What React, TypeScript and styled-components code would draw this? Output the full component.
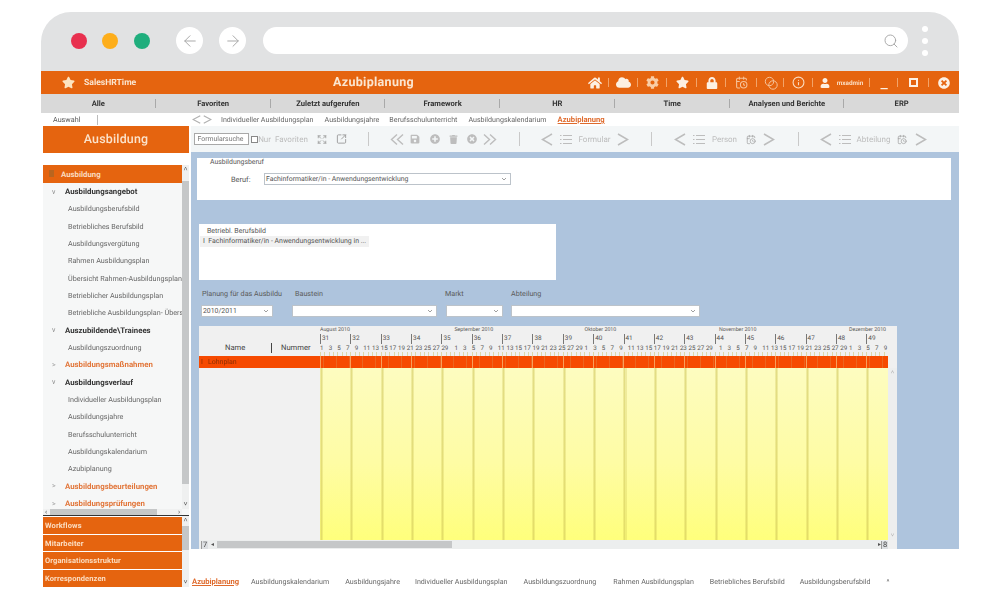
import React from "react";
import styled, { createGlobalStyle } from "styled-components";
import { FaCloud, FaCog, FaHome, FaLock, FaPlusCircle, FaSave, FaStar, FaTimesCircle, FaTrash, FaUser } from "react-icons/fa";
import { CalendarClock, Expand, Info, Search, SquareArrowOutUpRight, ArrowLeft, ArrowRight } from "lucide-react";

const Global = createGlobalStyle`
  html, body { margin: 0; padding: 0; background: #fff; width: 1000px; height: 600px; overflow: hidden; }
  * { box-sizing: border-box; }
  body { font-family: Roboto, "Liberation Sans", sans-serif; color: #555; text-rendering: geometricPrecision; }
`;

const ORANGE = "#e5640f";

const Frame = styled.div`
  width: 918px;
  height: 575px;
  margin: 12px 0 0 41px;
  display: flex;
  flex-direction: column;
  filter: blur(0.3px);
`;
const Chrome = styled.div`
  height: 59px;
  background: #e1e2e3;
  border-radius: 30px 30px 0 0;
  display: flex;
  align-items: center;
  padding: 0 0 2px 30px;
`;
const Light = styled.span<{ $c: string; $ml: number }>`
  width: 16px; height: 16px; border-radius: 50%;
  background: ${p => p.$c};
  margin-left: ${p => p.$ml}px;
`;
const NavBtn = styled.span<{ $ml: number }>`
  width: 27px; height: 27px; border-radius: 50%; background: #fff;
  margin-left: ${p => p.$ml}px;
  display: flex; align-items: center; justify-content: center; color: #a8a8a8;
`;
const Address = styled.div`
  width: 645px; height: 27px; border-radius: 14px; background: #fff;
  margin-left: 17px;
  display: flex; align-items: center; justify-content: flex-end; padding-right: 9px; color: #a5a5a5;
`;
const Dots = styled.div`
  margin-left: 14px;
  display: flex; flex-direction: column; gap: 6px;
  span { width: 6px; height: 6px; border-radius: 50%; background: #fff; display: block; }
`;
const TitleBar = styled.div`
  height: 23px; background: ${ORANGE}; color: #fbe6d0;
  display: flex; align-items: center;
`;
const Brand = styled.div`
  width: 292px; padding-left: 21px; display: flex; align-items: center; gap: 9px;
  font-size: 8.6px; font-weight: 700;
`;
const Title = styled.div`
  width: 76px; font-size: 12.5px; font-weight: 700; letter-spacing: .3px; white-space: nowrap; text-align: center;
`;
const Actions = styled.div`
  margin-left: auto; display: flex; height: 100%; align-items: center;
`;
const Action = styled.div<{ $w: number; $sep?: boolean }>`
  width: ${p => p.$w}px; height: 100%;
  display: flex; align-items: center; justify-content: center; gap: 7px; position: relative;
  color: #fdf0e2;
  &::after {
    content: ""; display: ${p => (p.$sep ? "block" : "none")};
    position: absolute; right: 0; top: 7px; height: 9px; width: 1px; background: #f2a469;
  }
`;
const UserName = styled.span`
  font-size: 6.4px; font-weight: 700; color: #fbdcc0;
`;
const MenuBar = styled.div`
  height: 19px; background: #d9d9d9; display: grid; grid-template-columns: repeat(8, 1fr);
`;
const MenuItem = styled.div`
  font-size: 7.6px; font-weight: 700; color: #333;
  display: flex; align-items: center; justify-content: center; position: relative;
  &:not(:last-child)::after {
    content: ""; position: absolute; right: 0; top: 5px; height: 9px; width: 1px; background: #a9a9a9;
  }
`;
const Main = styled.div`
  flex: 1; display: grid; grid-template-columns: 150px 1fr; min-height: 0;
`;
const LeftCol = styled.div`
  display: flex; flex-direction: column; padding-left: 2px; width: 148px; min-height: 0;
`;
const AuswahlTab = styled.div`
  height: 13px; display: flex; align-items: center; font-size: 7.2px; color: #555; padding-left: 10px;
  position: relative;
  &::after { content: ""; position: absolute; left: 54px; top: 2px; height: 10px; width: 1px; background: #bbb; }
`;
const PanelHead = styled.div`
  height: 27px; background: ${ORANGE}; color: #fbe3cc; font-size: 12.4px; font-weight: 500; letter-spacing: .2px;
  display: flex; align-items: center; justify-content: center;
`;
const TreeWrap = styled.div`
  margin-top: 12px; height: 350px; display: grid;
  grid-template-columns: 139px 7px; grid-template-rows: 344px 6px; background: #f6f7f7;
`;
const Tree = styled.div`
  overflow: hidden; min-width: 0;
`;
const TreeHead = styled.div`
  height: 18px; background: ${ORANGE}; color: #fbdcc0; font-size: 7.8px; font-weight: 700;
  display: flex; align-items: center; padding-left: 18px; position: relative;
  &::before { content: ""; position: absolute; left: 6px; top: 5px; width: 5px; height: 7px; background: #b9651f; }
`;
const Row = styled.div<{ $kind: "group" | "link" | "item" }>`
  height: 17.33px; display: flex; align-items: center; white-space: nowrap;
  font-size: ${p => (p.$kind === "item" ? 7.2 : 7.8)}px;
  padding-left: ${p => (p.$kind === "item" ? 25 : 9)}px;
  font-weight: ${p => (p.$kind === "item" ? 400 : 700)};
  color: ${p => (p.$kind === "item" ? "#666" : p.$kind === "link" ? "#e2763a" : "#333")};
`;
const Caret = styled.span`
  width: 13px; font-size: 7px; font-weight: 400; color: #888;
`;
const VScroll = styled.div<{ $thumbTop: number; $thumbH: number }>`
  background: #eff0f0; position: relative; color: #555; font-size: 7px;
  display: flex; flex-direction: column; justify-content: space-between; align-items: center;
  &::before {
    content: ""; position: absolute; left: 0; right: 0; top: ${p => p.$thumbTop}px; height: ${p => p.$thumbH}px; background: #c5c7c8;
  }
`;
const ArrowGlyph = styled.span`
  position: relative; line-height: 9px; height: 9px; font-size: 7px; color: #555;
`;
const HScroll = styled.div`
  background: #f0f1f1; display: flex; align-items: center; font-size: 7px; color: #555; padding: 0 2px;
  i { display: block; width: 107px; height: 6px; background: #c5c7c8; margin: 0 auto 0 3px; font-style: normal; }
`;
const ScrollEnd = styled.div`
  background: #f6f7f7;
`;
const Accordion = styled.div`
  border-top: 1.5px solid #333; height: 72px; display: grid; grid-template-columns: 139px 7px;
`;
const AccList = styled.div`
  display: flex; flex-direction: column; gap: 1px; padding-top: 1px;
`;
const AccItem = styled.div`
  height: 16.7px; background: ${ORANGE}; color: #fbdcc0; font-size: 7.5px; font-weight: 700; letter-spacing: .1px;
  display: flex; align-items: center; padding-left: 2px;
`;
const RightCol = styled.div`
  display: flex; flex-direction: column; min-width: 0;
`;
const SubTabs = styled.div`
  height: 13px; display: flex; align-items: center; padding-left: 1px; color: #b0b0b0;
`;
const TabText = styled.span<{ $ml: number; $active?: boolean }>`
  margin-left: ${p => p.$ml}px; white-space: nowrap;
  font-size: ${p => (p.$active ? 7.6 : 7.12)}px;
  color: ${p => (p.$active ? "#df6a2c" : "#666")};
  font-weight: ${p => (p.$active ? 700 : 400)};
  text-decoration: ${p => (p.$active ? "underline" : "none")};
`;
const Toolbar = styled.div`
  height: 26px; background: #f3f6f7; display: flex; align-items: center; padding-left: 3px; color: #bcbcbc;
`;
const SearchBox = styled.div`
  width: 55px; height: 12px; border: 1px solid #a8a8a8; background: #fff; font-size: 6.9px; color: #777;
  display: flex; align-items: center; padding-left: 2.5px; white-space: nowrap; overflow: hidden;
`;
const Check = styled.span`
  width: 7px; height: 7px; border: 1px solid #888; background: #fff; margin-left: 2px;
`;
const Tool = styled.span<{ $ml: number; $w: number; $dark?: boolean }>`
  margin-left: ${p => p.$ml}px; width: ${p => p.$w}px; display: flex; align-items: center; justify-content: center;
  font-size: 8px; color: ${p => (p.$dark ? "#9a9a9a" : "#bdbdbd")}; white-space: nowrap; flex: none;
`;
const ToolSep = styled.span<{ $ml: number }>`
  margin-left: ${p => p.$ml}px; width: 1px; height: 14px; background: #c9c9c9; flex: none;
`;
const Blue = styled.div`
  height: 397px; background: #aec4dd; padding: 6px 8px 0 6px; display: flex; flex-direction: column;
`;
const FieldPanel = styled.div`
  height: 42px; background: #fff; padding: 0 0 0 13px; display: flex; flex-direction: column;
  color: #555;
`;
const Legend = styled.div`
  height: 7px; line-height: 7px; font-size: 6.9px; transform: translateY(0.5px);
`;
const FieldRow = styled.div`
  display: flex; align-items: center; margin-top: 8px; padding-left: 21px;
`;
const FieldLabel = styled.span`
  width: 33px; font-size: 7.4px;
`;
const Select = styled.div<{ $w: number; $ml?: number }>`
  width: ${p => p.$w}px; height: 12px; margin-left: ${p => p.$ml ?? 0}px; background: #fff; border: 1px solid #bcc3ca;
  display: flex; align-items: center; justify-content: space-between; padding: 0 3px 0 1px;
  font-size: 6.9px; color: #555; white-space: nowrap; flex: none;
`;
const ListPanel = styled.div`
  width: 357px; height: 57px; margin: 24px 0 0 2px; background: #fff; padding-top: 3px; font-size: 7px; color: #555;
`;
const ListTitle = styled.div`
  height: 8px; line-height: 8px; padding-left: 8px;
`;
const ListRow = styled.div`
  width: 169px; height: 11px; margin-left: 1px; margin-top: 1px; background: #f1f1f1; padding-left: 3px;
  display: flex; align-items: center; white-space: nowrap; font-size: 6.95px;
`;
const FilterLabels = styled.div`
  margin: 10px 0 0 5px; height: 8px; display: flex; font-size: 7.2px; color: #5a5a5a; line-height: 8px;
`;
const FilterLabel = styled.span<{ $w: number }>`
  width: ${p => p.$w}px; white-space: nowrap; flex: none;
`;
const FilterRow = styled.div`
  margin: 7px 0 0 4px; display: flex;
`;
const Gantt = styled.div`
  margin: 9px 0 0 2px; width: 698px; height: 223px; background: #f0f0f0;
  display: grid; grid-template-columns: 121px 568px 9px; grid-template-rows: 30px 12px 172px 9px;
`;
const NameHead = styled.div`
  display: flex; align-items: flex-end; padding-bottom: 3px; font-size: 7.6px; color: #444;
  span:first-child { margin-left: 26px; width: 47px; border-right: 1px solid #444; line-height: 10px; }
  span:last-child { margin-left: 9px; line-height: 10px; }
`;
const TimeHead = styled.div`
  display: flex; flex-direction: column; overflow: hidden;
`;
const DayGrid = styled.div<{ $h: number; $fs: number }>`
  height: ${p => p.$h}px; display: grid; grid-template-columns: repeat(131, 1fr); font-size: ${p => p.$fs}px; color: #555;
`;
const Span = styled.div<{ $n: number; $line?: boolean }>`
  grid-column: span ${p => p.$n}; white-space: nowrap; overflow: visible; line-height: 8px;
  border-left: ${p => (p.$line ? "1px solid #777" : "none")};
  padding-left: ${p => (p.$line ? 1 : 0)}px;
`;
const Ticks = styled.div`
  height: 4px;
  background: repeating-linear-gradient(90deg, #ddd6a8 0 1px, transparent 1px 4.336px);
`;
const EmptyCell = styled.div`
  background: #f0f0f0;
`;
const RowName = styled.div`
  background: #f64a00; color: #8c2f00; font-size: 7px; display: flex; align-items: center; padding-left: 2px; gap: 5px;
`;
const RowBars = styled.div`
  background:
    repeating-linear-gradient(90deg, #f7a05c 0 1px, transparent 1px 30.35px),
    repeating-linear-gradient(90deg, transparent 0 3px, rgba(232,110,40,.75) 3px 4px, transparent 4px 13px),
    #f64a00;
`;
const RowEnd = styled.div`
  background: #f0f0f0;
`;
const NamesBody = styled.div`
  background: #f1f1f1;
`;
const Grid = styled.div`
  background:
    repeating-linear-gradient(90deg, rgba(205,195,85,.3) 0 1px, rgba(205,195,85,.55) 1px 2px, rgba(205,195,85,.3) 2px 3px, transparent 3px 30.35px),
    linear-gradient(180deg, #fdfcc0 0%, #fefca4 55%, #ffff7c 100%);
`;
const GanttVBar = styled.div`
  background: #edeeee; display: flex; flex-direction: column; justify-content: space-between; align-items: center; font-size: 6px; color: #aaa; padding: 1px 0;
`;
const GanttFoot = styled.div`
  grid-column: 1 / 3; background: #eceeee; display: flex; align-items: center; font-size: 7.5px; color: #444; padding-left: 2px;
`;
const PageBox = styled.span`
  width: 7px; height: 8px; background: #dcdfe2; display: flex; align-items: center; justify-content: center; border-left: 1px solid #999;
`;
const FootThumb = styled.i`
  display: block; width: 235px; height: 7px; background: #c5c7c8; margin: 0 auto 0 3px;
`;
const FootArrow = styled.span`
  font-size: 6px; color: #555; margin-left: 3px;
`;
const BottomTabs = styled.div`
  margin-top: 26px; height: 12px; display: flex; align-items: center; padding-left: 1px;
`;
const Spacer = styled.span`
  width: 2px;
`;

const Chev = ({ dir, w = 12, h = 13 }: { dir: "l" | "r"; w?: number; h?: number }) => (
  <svg width={w} height={h} viewBox="0 0 12 13" fill="none" stroke="currentColor" strokeWidth="1.5" preserveAspectRatio="none">
    <polyline points={dir === "l" ? "11,1 1.5,6.5 11,12" : "1,1 10.5,6.5 1,12"} />
  </svg>
);
const Dbl = ({ dir }: { dir: "l" | "r" }) => (
  <svg width="14" height="11" viewBox="0 0 14 11" fill="none" stroke="currentColor" strokeWidth="1.4">
    <polyline points={dir === "l" ? "7,0.5 1.5,5.5 7,10.5" : "1,0.5 6.5,5.5 1,10.5"} />
    <polyline points={dir === "l" ? "13,0.5 7.5,5.5 13,10.5" : "7,0.5 12.5,5.5 7,10.5"} />
  </svg>
);
const ListIcon = () => (
  <svg width="12" height="11" viewBox="0 0 12 11" fill="none" stroke="currentColor" strokeWidth="1">
    <path d="M0 1.5h1.5M3 1.5h9M0 5.5h1.5M3 5.5h9M0 9.5h1.5M3 9.5h9" />
  </svg>
);
const Caret2 = () => (
  <svg width="6" height="4" viewBox="0 0 6 4" fill="none" stroke="#888" strokeWidth="0.8"><polyline points="1,1 3,3 5,1" /></svg>
);
const Chat = () => (
  <svg width="14" height="14" viewBox="0 0 14 14" fill="none" stroke="#f6c39a" strokeWidth="1">
    <circle cx="5.5" cy="5.5" r="4.2" /><circle cx="9" cy="9" r="4.2" />
  </svg>
);

const actions = [29, 29, 29, 30, 29, 31, 27, 29];
const icons = [
  <FaHome size={14} />, <FaCloud size={15} />, <FaCog size={13} color="#f9cda6" />, <FaStar size={13} />, <FaLock size={12} />,
  <CalendarClock size={13} color="#f6c39a" />, <Chat />, <Info size={13} color="#fbdcc0" />,
];
const menu = ["Alle", "Favoriten", "Zuletzt aufgerufen", "Framework", "HR", "Time", "Analysen und Berichte", "ERP"];
const tree: { t: string; k: "group" | "link" | "item"; c?: string }[] = [
  { t: "Ausbildungsangebot", k: "group", c: "v" },
  { t: "Ausbildungsberufsbild", k: "item" },
  { t: "Betriebliches Berufsbild", k: "item" },
  { t: "Ausbildungsvergütung", k: "item" },
  { t: "Rahmen Ausbildungsplan", k: "item" },
  { t: "Übersicht Rahmen-Ausbildungsplan", k: "item" },
  { t: "Betrieblicher Ausbildungsplan", k: "item" },
  { t: "Betriebliche Ausbildungsplan- Übersicht", k: "item" },
  { t: "Auszubildende\\Trainees", k: "group", c: "v" },
  { t: "Ausbildungszuordnung", k: "item" },
  { t: "Ausbildungsmaßnahmen", k: "link", c: ">" },
  { t: "Ausbildungsverlauf", k: "group", c: "v" },
  { t: "Individueller Ausbildungsplan", k: "item" },
  { t: "Ausbildungsjahre", k: "item" },
  { t: "Berufsschulunterricht", k: "item" },
  { t: "Ausbildungskalendarium", k: "item" },
  { t: "Azubiplanung", k: "item" },
  { t: "Ausbildungsbeurteilungen", k: "link", c: ">" },
  { t: "Ausbildungsprüfungen", k: "link", c: ">" },
];
const months = [
  { n: "August 2010", d: 31 }, { n: "September 2010", d: 30 }, { n: "Oktober 2010", d: 31 },
  { n: "November 2010", d: 30 }, { n: "Dezember 2010", d: 9 },
];
const dayCells: { label: string; span: number }[] = months.flatMap(m => {
  const out: { label: string; span: number }[] = [];
  for (let d = 1; d <= m.d; d += 2) {
    const span = Math.min(2, m.d - d + 1);
    out.push({ label: d === 31 ? "" : String(d), span });
  }
  return out;
});
const weeks = Array.from({ length: 19 }, (_, i) => 31 + i);
const bottom = [
  ["Azubiplanung", 0], ["Ausbildungskalendarium", 12], ["Ausbildungsjahre", 16], ["Individueller Ausbildungsplan", 15],
  ["Ausbildungszuordnung", 16], ["Rahmen Ausbildungsplan", 17], ["Betriebliches Berufsbild", 16], ["Ausbildungsberufsbild", 15], ["^", 16],
] as const;

export default function App() {
  return (
    <>
      <Global />
      <Frame>
        <Chrome>
          <Light $c="#e8304f" $ml={0} />
          <Light $c="#fdae1b" $ml={15} />
          <Light $c="#1fae7d" $ml={16} />
          <NavBtn $ml={26}><ArrowLeft size={18} strokeWidth={1.3} /></NavBtn>
          <NavBtn $ml={16}><ArrowRight size={18} strokeWidth={1.3} /></NavBtn>
          <Address><Search size={16} strokeWidth={1.4} /></Address>
          <Dots><span /><span /><span /></Dots>
        </Chrome>
        <TitleBar>
          <Brand><FaStar size={13} color="#fde4c0" />SalesHRTime</Brand>
          <Title>Azubiplanung</Title>
          <Actions>
            {actions.map((w, i) => <Action key={i} $w={w} $sep>{icons[i]}</Action>)}
            <Action $w={57} $sep><FaUser size={10} /><UserName>mxadmin</UserName></Action>
            <Action $w={28} $sep><span>_</span></Action>
            <Action $w={31} $sep><svg width="9" height="9" viewBox="0 0 9 9"><rect x="1" y="1" width="7" height="7" fill="none" stroke="#fdf0e2" strokeWidth="2" /></svg></Action>
            <Action $w={30}><FaTimesCircle size={12} /></Action>
          </Actions>
        </TitleBar>
        <MenuBar>{menu.map(m => <MenuItem key={m}>{m}</MenuItem>)}</MenuBar>
        <Main>
          <LeftCol>
            <AuswahlTab>Auswahl</AuswahlTab>
            <PanelHead>Ausbildung</PanelHead>
            <TreeWrap>
              <Tree>
                <TreeHead>Ausbildung</TreeHead>
                {tree.map(r => (
                  <Row key={r.t} $kind={r.k}>{r.c && <Caret>{r.c}</Caret>}{r.t}</Row>
                ))}
              </Tree>
              <VScroll $thumbTop={16} $thumbH={303}>
                <ArrowGlyph>˄</ArrowGlyph><ArrowGlyph>˅</ArrowGlyph>
              </VScroll>
              <HScroll>‹<i /><span>›</span></HScroll>
              <ScrollEnd />
            </TreeWrap>
            <Accordion>
              <AccList>
                {["Workflows", "Mitarbeiter", "Organisationsstruktur", "Korrespondenzen"].map(a => <AccItem key={a}>{a}</AccItem>)}
              </AccList>
              <VScroll $thumbTop={10} $thumbH={24}>
                <ArrowGlyph>˄</ArrowGlyph><ArrowGlyph>˅</ArrowGlyph>
              </VScroll>
            </Accordion>
          </LeftCol>
          <RightCol>
            <SubTabs>
              <Chev dir="l" w={9} h={9} /><Spacer /><Chev dir="r" w={9} h={9} />
              <TabText $ml={9}>Individueller Ausbildungsplan</TabText>
              <TabText $ml={11}>Ausbildungsjahre</TabText>
              <TabText $ml={10}>Berufsschulunterricht</TabText>
              <TabText $ml={11}>Ausbildungskalendarium</TabText>
              <TabText $ml={11} $active>Azubiplanung</TabText>
            </SubTabs>
            <Toolbar>
              <SearchBox>Formularsuche</SearchBox>
              <Check />
              <Tool $ml={1} $w={48}>Nur&nbsp;&nbsp;Favoriten</Tool>
              <Tool $ml={10} $w={10} $dark><Expand size={11} /></Tool>
              <Tool $ml={9} $w={11} $dark><SquareArrowOutUpRight size={12} /></Tool>
              <ToolSep $ml={21} />
              <Tool $ml={21} $w={14}><Dbl dir="l" /></Tool>
              <Tool $ml={6} $w={10}><FaSave size={10} /></Tool>
              <Tool $ml={10} $w={10}><FaPlusCircle size={10} /></Tool>
              <Tool $ml={8} $w={10}><FaTrash size={9} /></Tool>
              <Tool $ml={9} $w={10}><FaTimesCircle size={10} /></Tool>
              <Tool $ml={6} $w={14}><Dbl dir="r" /></Tool>
              <ToolSep $ml={22} />
              <Tool $ml={21} $w={12}><Chev dir="l" /></Tool>
              <Tool $ml={7} $w={12}><ListIcon /></Tool>
              <Tool $ml={7} $w={31}>Formular</Tool>
              <Tool $ml={7} $w={12}><Chev dir="r" /></Tool>
              <ToolSep $ml={22} />
              <Tool $ml={22} $w={12}><Chev dir="l" /></Tool>
              <Tool $ml={7} $w={12}><ListIcon /></Tool>
              <Tool $ml={7} $w={25}>Person</Tool>
              <Tool $ml={9} $w={10} $dark><CalendarClock size={13} strokeWidth={1.6} /></Tool>
              <Tool $ml={7} $w={12}><Chev dir="r" /></Tool>
              <ToolSep $ml={23} />
              <Tool $ml={21} $w={12}><Chev dir="l" /></Tool>
              <Tool $ml={7} $w={12}><ListIcon /></Tool>
              <Tool $ml={6} $w={33}>Abteilung</Tool>
              <Tool $ml={7} $w={10} $dark><CalendarClock size={13} strokeWidth={1.6} /></Tool>
              <Tool $ml={8} $w={12}><Chev dir="r" /></Tool>
            </Toolbar>
            <Blue>
              <FieldPanel>
                <Legend>Ausbildungsberuf</Legend>
                <FieldRow>
                  <FieldLabel>Beruf:</FieldLabel>
                  <Select $w={247}>Fachinformatiker/in - Anwendungsentwicklung<Caret2 /></Select>
                </FieldRow>
              </FieldPanel>
              <ListPanel>
                <ListTitle>Betriebl. Berufsbild</ListTitle>
                <ListRow>I&nbsp;&nbsp;Fachinformatiker/in - Anwendungsentwicklung in ...</ListRow>
              </ListPanel>
              <FilterLabels>
                <FilterLabel $w={93}>Planung für das Ausbildu</FilterLabel>
                <FilterLabel $w={150}>Baustein</FilterLabel>
                <FilterLabel $w={66}>Markt</FilterLabel>
                <FilterLabel $w={40}>Abteilung</FilterLabel>
              </FilterLabels>
              <FilterRow>
                <Select $w={72}>2010/2011<Caret2 /></Select>
                <Select $w={145} $ml={19}><span /><Caret2 /></Select>
                <Select $w={57} $ml={9}><span /><Caret2 /></Select>
                <Select $w={189} $ml={8}><span /><Caret2 /></Select>
              </FilterRow>
              <Gantt>
                <NameHead><span>Name</span><span>Nummer</span></NameHead>
                <TimeHead>
                  <DayGrid $h={8} $fs={5.3}>{months.map(m => <Span key={m.n} $n={m.d}>{m.n}</Span>)}</DayGrid>
                  <DayGrid $h={10} $fs={6.4}>{weeks.map(w => <Span key={w} $n={w === 49 ? 5 : 7} $line>{w}</Span>)}</DayGrid>
                  <DayGrid $h={8} $fs={6.2}>{dayCells.map((d, i) => <Span key={i} $n={d.span}>{d.label}</Span>)}</DayGrid>
                  <Ticks />
                </TimeHead>
                <EmptyCell />
                <RowName><span>I</span><span>Lohnplan</span></RowName>
                <RowBars />
                <RowEnd />
                <NamesBody />
                <Grid />
                <GanttVBar><span>˄</span><span>˅</span></GanttVBar>
                <GanttFoot>
                  <PageBox>7</PageBox><FootArrow>◂</FootArrow><FootThumb />
                  <FootArrow>▸</FootArrow><PageBox>8</PageBox>
                </GanttFoot>
                <EmptyCell />
              </Gantt>
            </Blue>
            <BottomTabs>
              {bottom.map(([t, ml], i) => <TabText key={t} $ml={ml} $active={i === 0}>{t}</TabText>)}
            </BottomTabs>
          </RightCol>
        </Main>
      </Frame>
    </>
  );
}
